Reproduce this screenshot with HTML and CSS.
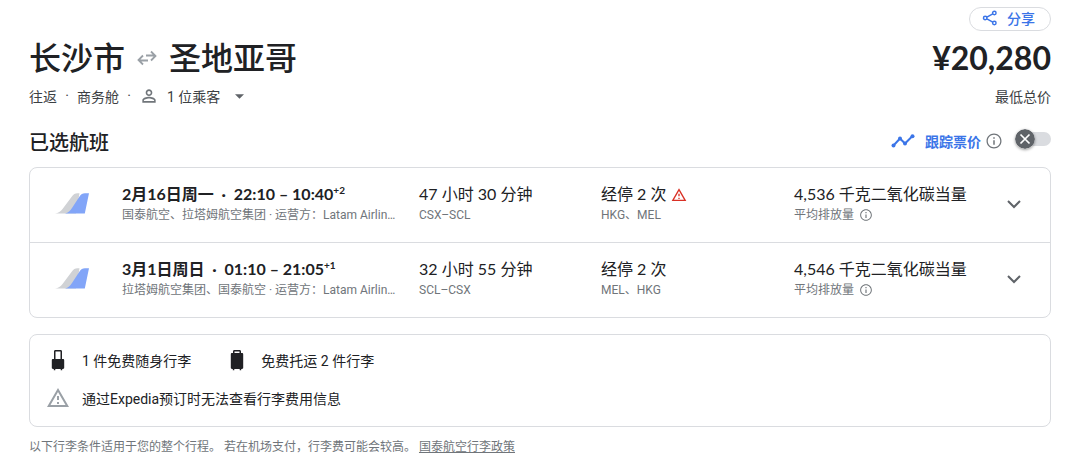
FILE: index.html
```html
<!DOCTYPE html>
<html lang="zh-CN">
<head>
    <meta charset="UTF-8">
    <meta name="viewport" content="width=device-width, initial-scale=1.0">
    <title>长沙市 - 圣地亚哥</title>
    <link rel="stylesheet" href="styles.css">
</head>
<body>
    <!-- shared icons -->
    <svg class="sprite" aria-hidden="true">
        <symbol id="info" viewBox="0 0 24 24">
            <path d="M11 17h2v-6h-2v6zm1-15C6.480 2 2 6.480 2 12s4.480 10 10 10 10-4.480 10-10S17.520 2 12 2zm0 18.300c-4.600 0-8.300-3.700-8.300-8.300S7.400 3.700 12 3.700s8.300 3.700 8.300 8.300-3.700 8.300-8.300 8.300zM11 9h2V7h-2v2z"/>
        </symbol>
        <symbol id="warning" viewBox="0 0 24 24">
            <path d="M12 5.990L19.530 19H4.470L12 5.990M12 2L1 21h22L12 2zm1 14h-2v2h2v-2zm0-6h-2v4h2v-4z"/>
        </symbol>
        <symbol id="chevron" viewBox="0 0 24 24">
            <path d="M6 9l6 6 6-6" fill="none" stroke="currentColor" stroke-width="2"/>
        </symbol>
        <symbol id="tail" viewBox="0 0 34 21">
            <path d="M0 20.500C3.500 20 5.500 18.500 7.500 16L16.500 4C18.500 1.200 20 .3 22.500.3h2L21 20.500z" fill="#d0d2d5"/>
            <path d="M10 20.500C13.500 19.500 15 18 17 15L24.500 3.500C26 1.200 27.500.3 30 .3h4l-4.200 20.200z" fill="#82a5f8"/>
        </symbol>
    </svg>

    <header>
        <div class="share-row">
            <button type="button" class="share">
                <svg class="share-icon" viewBox="0 0 24 24" aria-hidden="true">
                    <g fill="none" stroke="currentColor" stroke-width="2.200">
                        <path d="M7.400 10.700l8.700-5M7.400 13.300l8.700 5"/>
                        <circle cx="4.800" cy="12" r="2.600"/>
                        <circle cx="18.500" cy="4.500" r="2.600"/>
                        <circle cx="18.500" cy="19.500" r="2.600"/>
                    </g>
                </svg>
                分享
            </button>
        </div>
        <div class="title-row">
            <h1>
                长沙市
                <svg class="swap" viewBox="0 0 20 16" aria-hidden="true">
                    <path d="M6 5.500L1.500 10 6 14.500M1.500 10.500H11M14 1.500L18.500 6 14 10.500M18.500 5.500H9" fill="none" stroke="#9aa0a6" stroke-width="1.800"/>
                </svg>
                圣地亚哥
            </h1>
            <p class="price">¥20,280</p>
        </div>
        <div class="sub-row">
            <span>往返</span>
            <span class="dot">·</span>
            <span>商务舱</span>
            <span class="dot">·</span>
            <button type="button" class="passengers" aria-haspopup="true">
                <svg class="person" viewBox="0 0 24 24" aria-hidden="true">
                    <path d="M12 5.900a2.100 2.100 0 1 1 0 4.200 2.100 2.100 0 0 1 0-4.200m0 9c2.970 0 6.100 1.460 6.100 2.100v1.100H5.900V17c0-.64 3.130-2.100 6.100-2.100M12 4C9.790 4 8 5.790 8 8s1.790 4 4 4 4-1.790 4-4-1.790-4-4-4zm0 9c-2.670 0-8 1.340-8 4v3h16v-3c0-2.660-5.330-4-8-4z"/>
                </svg>
                1 位乘客
                <svg class="caret" viewBox="0 0 10 5" aria-hidden="true"><path d="M0 0h10L5 5z"/></svg>
            </button>
            <span class="price-note">最低总价</span>
        </div>
    </header>

    <main>
        <div class="section-row">
            <h2>已选航班</h2>
            <div class="track">
                <svg class="trend" viewBox="0 0 24 14" aria-hidden="true">
                    <path d="M2.500 11.500L9 4.500l5 5 7.500-7.500" fill="none" stroke="currentColor" stroke-width="2"/>
                    <circle cx="2.500" cy="11.500" r="2"/>
                    <circle cx="9" cy="4.500" r="2"/>
                    <circle cx="14" cy="9.500" r="2"/>
                    <circle cx="21.500" cy="2.300" r="2"/>
                </svg>
                <label for="track-price">跟踪票价</label>
                <svg class="info-large" aria-hidden="true"><use href="#info"/></svg>
                <span class="switch">
                    <input type="checkbox" id="track-price">
                    <svg class="thumb" viewBox="0 0 20 20" aria-hidden="true">
                        <circle cx="10" cy="10" r="10" fill="#5f6368"/>
                        <path d="M5.500 5.500l9 9M14.500 5.500l-9 9" stroke="#fff" stroke-width="1.700"/>
                    </svg>
                </span>
            </div>
        </div>

        <ul class="card flights">
            <li class="flight">
                <svg class="airline" aria-hidden="true"><use href="#tail"/></svg>
                <div class="cell">
                    <p class="main bold">2月16日周一 &nbsp;·&nbsp; 22:10 – 10:40<sup>+2</sup></p>
                    <p class="detail">国泰航空、拉塔姆航空集团 · 运营方：Latam Airlin…</p>
                </div>
                <div class="cell">
                    <p class="main">47 小时 30 分钟</p>
                    <p class="detail">CSX–SCL</p>
                </div>
                <div class="cell">
                    <p class="main">经停 2 次 <svg class="alert" aria-hidden="true"><use href="#warning"/></svg></p>
                    <p class="detail">HKG、MEL</p>
                </div>
                <div class="cell">
                    <p class="main">4,536 千克二氧化碳当量</p>
                    <p class="detail">平均排放量 <svg class="info-small" aria-hidden="true"><use href="#info"/></svg></p>
                </div>
                <button type="button" class="expand" aria-label="航班详情"><svg aria-hidden="true"><use href="#chevron"/></svg></button>
            </li>
            <li class="flight">
                <svg class="airline" aria-hidden="true"><use href="#tail"/></svg>
                <div class="cell">
                    <p class="main bold">3月1日周日 &nbsp;·&nbsp; 01:10 – 21:05<sup>+1</sup></p>
                    <p class="detail">拉塔姆航空集团、国泰航空 · 运营方：Latam Airlin…</p>
                </div>
                <div class="cell">
                    <p class="main">32 小时 55 分钟</p>
                    <p class="detail">SCL–CSX</p>
                </div>
                <div class="cell">
                    <p class="main">经停 2 次</p>
                    <p class="detail">MEL、HKG</p>
                </div>
                <div class="cell">
                    <p class="main">4,546 千克二氧化碳当量</p>
                    <p class="detail">平均排放量 <svg class="info-small" aria-hidden="true"><use href="#info"/></svg></p>
                </div>
                <button type="button" class="expand" aria-label="航班详情"><svg aria-hidden="true"><use href="#chevron"/></svg></button>
            </li>
        </ul>

        <section class="card baggage">
            <div class="bag-row">
                <p class="bag">
                    <svg viewBox="0 0 24 24" aria-hidden="true">
                        <path d="M8 11V3.500C8 2.500 8.600 2 9.500 2h5c.9 0 1.500.5 1.500 1.500V11h1c.7 0 1.200.5 1.200 1.200v7.600c0 .7-.5 1.200-1.200 1.200h-.8v1.200h-1.500V21H9.300v1.200H7.800V21H7c-.7 0-1.200-.5-1.200-1.200v-7.600C5.800 11.500 6.300 11 7 11zm1.500 0h5V3.500h-5z"/>
                    </svg>
                    1 件免费随身行李
                </p>
                <p class="bag">
                    <svg viewBox="0 0 24 24" aria-hidden="true">
                        <path d="M8 5V3.500C8 2.500 8.600 2 9.500 2h5c.9 0 1.500.5 1.500 1.500V5h1c.7 0 1.200.5 1.200 1.200v13.600c0 .7-.5 1.200-1.200 1.200h-.8v1.200h-1.500V21H9.300v1.200H7.800V21H7c-.7 0-1.200-.5-1.200-1.200V6.200C5.800 5.500 6.300 5 7 5zm1.500 0h5V3.500h-5z"/>
                    </svg>
                    免费托运 2 件行李
                </p>
            </div>
            <p class="bag notice">
                <svg aria-hidden="true"><use href="#warning"/></svg>
                通过Expedia预订时无法查看行李费用信息
            </p>
        </section>

        <p class="footnote">以下行李条件适用于您的整个行程。 若在机场支付，行李费可能会较高。 <a href="#">国泰航空行李政策</a></p>
    </main>
</body>
</html>
```

FILE: styles.css
```css
*{
    padding: 0px;
    margin: 0px;
    box-sizing: border-box;
}
body{
    padding: 7px 29px 12px;
    background-color: white;
    color: #202124;
    font-family: Roboto, "Noto Sans CJK SC", sans-serif;
    font-size: 14px;
}
svg{
    flex: none;
    fill: currentColor;
}
button{
    border: none;
    background: none;
    color: inherit;
    font: inherit;
    cursor: pointer;
}
ul{
    list-style: none;
}
.sprite{
    display: none;
}

/* header */
.share-row{
    display: flex;
    justify-content: flex-end;
}
.share{
    display: flex;
    align-items: center;
    gap: 9px;
    height: 24px;
    padding: 0px 15px 2px 12px;
    border: 1px solid #dadce0;
    border-radius: 12px;
    color: #3b75e8;
    font-weight: 500;
}
.share-icon{
    width: 16px;
    height: 16px;
}
.title-row{
    display: flex;
    justify-content: space-between;
    height: 40px;
    margin-top: 7px;
    line-height: 40px;
}
h1, .price{
    font-family: Lato, "Noto Sans CJK SC", sans-serif;
    font-size: 32px;
}
h1{
    display: flex;
    align-items: center;
    gap: 12px;
    font-weight: 500;
}
.price{
    font-weight: 700;
}
.swap{
    width: 20px;
    height: 16px;
}
.sub-row{
    display: flex;
    align-items: center;
    height: 24px;
    margin-top: 6px;
    color: #3c4043;
}
.dot{
    width: 20px;
    text-align: center;
}
.passengers{
    display: flex;
    align-items: center;
}
.person{
    width: 20px;
    height: 20px;
    margin-right: 8px;
    color: #70757a;
}
.caret{
    width: 9px;
    height: 5px;
    margin-left: 15px;
    color: #5f6368;
}
.price-note{
    margin-left: auto;
}

/* selected flights */
.section-row{
    display: flex;
    align-items: center;
    justify-content: space-between;
    height: 30px;
    margin: 18px 0px 11px;
}
h2{
    font-size: 20px;
    font-weight: 500;
}
.track{
    display: flex;
    align-items: center;
    color: #3b75e8;
    font-weight: 700;
}
.trend{
    width: 24px;
    height: 14px;
    margin-right: 10px;
}
.info-large{
    width: 18px;
    height: 18px;
    margin: 0px 12px 0px 4px;
    color: #70757a;
}
.switch{
    position: relative;
    display: flex;
    align-items: center;
    height: 20px;
    margin-bottom: 4px;
}
.switch input{
    appearance: none;
    width: 36px;
    height: 14px;
    border-radius: 7px;
    background-color: #dadce0;
}
.thumb{
    position: absolute;
    left: 0px;
    top: 0px;
    width: 20px;
    height: 20px;
    border-radius: 50%;
    box-shadow: 0px 1px 3px rgba(0, 0, 0, 0.4);
    pointer-events: none;
}
.card{
    border: 1px solid #dadce0;
    border-radius: 8px;
}
.flight{
    display: grid;
    grid-template-columns: 92px 297fr 182fr 193fr 184fr 72px;
    padding: 14px 0px 16px;
}
.flight + .flight{
    border-top: 1px solid #dadce0;
}
.airline{
    width: 34px;
    height: 21px;
    margin: 11px 0px 0px 25px;
}
.cell{
    min-width: 0px;
}
.main{
    font-family: Lato, "Noto Sans CJK SC", sans-serif;
    font-size: 16px;
    line-height: 24px;
    white-space: nowrap;
}
.bold{
    font-weight: 700;
}
.main sup{
    font-size: 10px;
    line-height: 10px;
}
.detail{
    color: #70757a;
    font-size: 12px;
    line-height: 18px;
    white-space: nowrap;
}
.alert{
    width: 16px;
    height: 16px;
    vertical-align: -3px;
    color: #d93025;
}
.info-small{
    width: 14px;
    height: 14px;
    margin-left: 2px;
    vertical-align: -3px;
}
.expand{
    display: flex;
    align-items: center;
    justify-content: center;
    height: 44px;
    color: #5f6368;
}
.expand svg{
    width: 24px;
    height: 24px;
}

/* baggage */
.baggage{
    margin-top: 16px;
    padding: 13px 16px 16px;
}
.bag-row{
    display: flex;
    gap: 34px;
    margin-bottom: 14px;
}
.bag{
    display: flex;
    align-items: center;
    gap: 12px;
    height: 24px;
}
.bag svg{
    width: 24px;
    height: 24px;
}
.notice svg{
    color: #9aa0a6;
}
.footnote{
    margin-top: 10px;
    color: #70757a;
    font-size: 12px;
    line-height: 20px;
}
.footnote a{
    color: inherit;
}
```
